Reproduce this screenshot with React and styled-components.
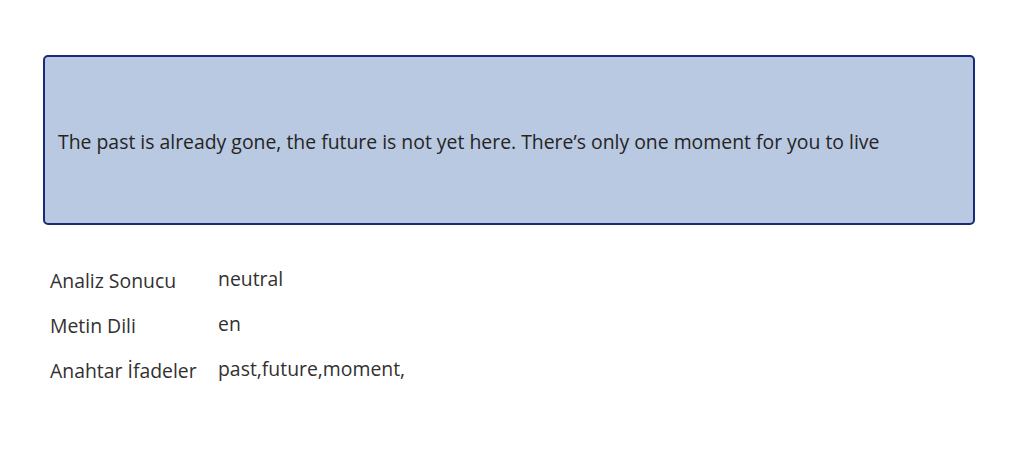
import styled, { createGlobalStyle } from "styled-components";

const Global = createGlobalStyle`
  body {
    margin: 0;
    background: #ffffff;
    font-family: "Open Sans", "Noto Sans", sans-serif;
    color: #323130;
  }
`;

const Page = styled.div`
  padding: 55px 48px 0 43px;
`;

const QuoteBox = styled.div`
  box-sizing: border-box;
  width: 932px;
  height: 170px;
  background: #b9c9e2;
  border: 2px solid #1b2a78;
  border-radius: 5px;
  display: flex;
  align-items: center;
  padding: 2px 13px 0;
  font-size: 19.4px;
  color: #252423;
`;

const Results = styled.div`
  display: grid;
  grid-template-columns: 168px auto;
  margin-top: 37px;
  padding-left: 7px;
`;

const Cell = styled.div`
  height: 45px;
  font-size: 19.4px;
  line-height: 26px;
  padding-top: ${(p) => (p.$value ? 4 : 6)}px;
  box-sizing: border-box;
  white-space: nowrap;
`;

const rows = [
  ["Analiz Sonucu", "neutral"],
  ["Metin Dili", "en"],
  ["Anahtar İfadeler", "past,future,moment,"],
];

export default function App() {
  return (
    <Page>
      <Global />
      <QuoteBox>
        The past is already gone, the future is not yet here. There’s only one
        moment for you to live
      </QuoteBox>
      <Results>
        {rows.map(([l, v]) => [
          <Cell key={l}>{l}</Cell>,
          <Cell key={v} $value>
            {v}
          </Cell>,
        ])}
      </Results>
    </Page>
  );
}
